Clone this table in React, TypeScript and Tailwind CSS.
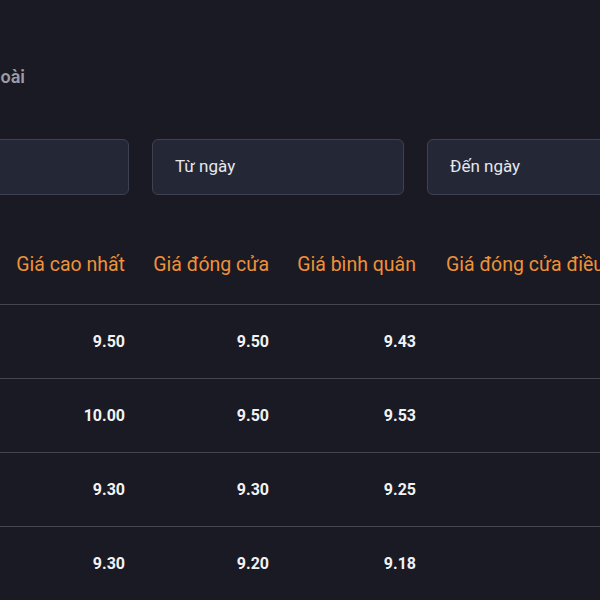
const rows = [
  { open: "9.40", high: "9.50", close: "9.50", avg: "9.43", adj: "9.50" },
  { open: "9.30", high: "10.00", close: "9.50", avg: "9.53", adj: "9.50" },
  { open: "9.20", high: "9.30", close: "9.30", avg: "9.25", adj: "9.30" },
  { open: "9.10", high: "9.30", close: "9.20", avg: "9.18", adj: "9.20" },
];

const gridCols = "grid grid-cols-[160px_141px_144px_147px_320px] ml-[-162px] w-[912px]";

export default function App() {
  return (
    <div className="w-[600px] h-[600px] overflow-hidden bg-[#1a1a24] font-['Roboto',sans-serif]">
      {/* Title */}
      <div className="pt-[64px] h-[139px]">
        <div className="w-[25px] flex justify-end whitespace-nowrap">
          <h2 className="text-[18px] font-semibold text-[#9a9ca6] leading-[26px]">Giao dịch nhà đầu tư nước ngoài</h2>
        </div>
      </div>

      {/* Filters */}
      <div className="flex gap-[23px] ml-[-123px] w-[900px]">
        <div className="w-[252px] h-[56px] shrink-0 rounded-[6px] border border-[#3e4150] bg-[#242736] px-[22px] flex items-center text-[17px] text-[#e6e7ec]">
          Mã CK
        </div>
        <div className="w-[252px] h-[56px] shrink-0 rounded-[6px] border border-[#3e4150] bg-[#242736] px-[22px] flex items-center text-[17px] text-[#e6e7ec]">
          Từ ngày
        </div>
        <div className="w-[252px] h-[56px] shrink-0 rounded-[6px] border border-[#3e4150] bg-[#242736] px-[22px] flex items-center text-[17px] text-[#e6e7ec]">
          Đến ngày
        </div>
      </div>

      {/* Table */}
      <div className="mt-[36px]">
        <div className={`${gridCols} h-[73px] pb-[6px] items-center text-[19.5px] text-[#ef9138] whitespace-nowrap`}>
          <div className="text-right px-[14px]">Giá mở cửa</div>
          <div className="text-right px-[14px]">Giá cao nhất</div>
          <div className="text-right px-[14px]">Giá đóng cửa</div>
          <div className="text-right px-[14px]">Giá bình quân</div>
          <div className="text-left px-[16px]">Giá đóng cửa điều chỉnh</div>
        </div>
        {rows.map((r, i) => (
          <div key={i} className="border-t border-[#43464f]">
            <div className={`${gridCols} h-[73px] items-center text-[16px] font-bold text-[#f1f2f5]`}>
              <div className="text-right px-[14px]">{r.open}</div>
              <div className="text-right px-[14px]">{r.high}</div>
              <div className="text-right px-[14px]">{r.close}</div>
              <div className="text-right px-[14px]">{r.avg}</div>
              <div className="text-right px-[14px]">{r.adj}</div>
            </div>
          </div>
        ))}
      </div>
    </div>
  );
}
